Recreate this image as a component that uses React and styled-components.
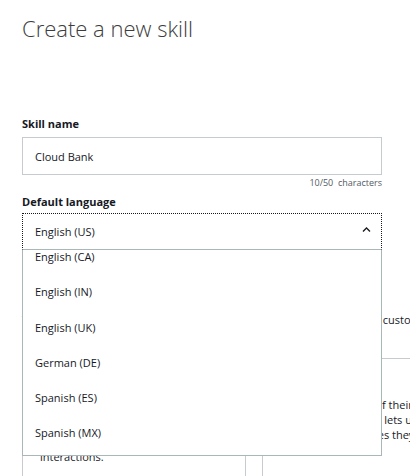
import React, { useEffect, useRef } from "react";
import styled, { createGlobalStyle } from "styled-components";

// ----- Global -----
const GlobalStyle = createGlobalStyle`
  html, body {
    margin: 0;
    padding: 0;
    background: #fff;
    overflow: hidden;
  }
  body {
    font-family: "Open Sans", "Noto Sans", sans-serif;
    color: #16191f;
  }
`;

// ----- Styled Components -----
const Page = styled.div`
  width: 760px;
  padding: 14px 0 40px 22px;
  box-sizing: border-box;
`;

const Title = styled.h1`
  margin: 0 0 74px;
  font-size: 22px;
  line-height: 28px;
  font-weight: 300;
  color: #3d3d3d;
`;

const Field = styled.div`
  position: relative;
  width: 360px;
  margin-bottom: ${({ $gap }) => $gap || 0}px;
`;

const Label = styled.label`
  display: block;
  font-size: 11px;
  line-height: 16px;
  font-weight: 700;
  color: #16191f;
  margin-bottom: ${({ $gap }) => $gap || 5}px;
`;

const TextInput = styled.div`
  height: 38px;
  box-sizing: border-box;
  border: 1px solid #c6cbcf;
  padding: 0 12px;
  display: flex;
  align-items: center;
  font-size: 11px;
  color: #16191f;
`;

const Counter = styled.div`
  text-align: right;
  font-size: 9px;
  line-height: 12px;
  margin-top: 2px;
  color: #545b64;
`;

const SelectWrap = styled.div`
  position: relative;
`;

const SelectBox = styled.div`
  height: 37px;
  box-sizing: border-box;
  border: 1px dotted #16191f;
  border-bottom: 1px solid #aab7b8;
  padding: 0 10px 0 12px;
  display: flex;
  align-items: center;
  justify-content: space-between;
  font-size: 11px;
  color: #16191f;

  svg {
    margin-bottom: 4px;
  }
`;

const Menu = styled.ul`
  position: absolute;
  top: 100%;
  left: 0;
  right: 0;
  height: 206px;
  margin: 0;
  padding: 0;
  list-style: none;
  box-sizing: border-box;
  border: 1px solid #aab7b8;
  border-top: none;
  background: #fff;
  overflow: hidden;
  z-index: 5;
`;

const Option = styled.li`
  height: 35.2px;
  display: flex;
  align-items: center;
  padding: 0 12px;
  font-size: 11px;
  color: #16191f;
`;

const Section = styled.section`
  margin-top: 36px;
`;

const SectionTitle = styled.h2`
  margin: 0 0 6px;
  font-size: 15px;
  line-height: 20px;
  font-weight: 400;
  color: #16191f;
`;

const Intro = styled.p`
  margin: 0 0 31px;
  font-size: 11px;
  line-height: 15px;
  white-space: nowrap;
  color: #16191f;
`;

const Cards = styled.div`
  display: flex;
  gap: 16px;
`;

const Card = styled.div`
  width: 224px;
  box-sizing: border-box;
  border: 1px solid #c6cbcf;
  padding: 16px 17px;
`;

const CardTitle = styled.div`
  font-size: 12px;
  line-height: 16px;
  font-weight: 700;
  margin-bottom: ${({ $gap }) => $gap}px;
`;

const CardText = styled.p`
  margin: 0;
  font-size: 11px;
  line-height: 15px;
  white-space: nowrap;
  color: #16191f;
`;

const Chevron = () => (
  <svg width="9" height="5" viewBox="0 0 9 5" fill="none">
    <path d="M1 4.5L4.5 1L8 4.5" stroke="#16191f" strokeWidth="1.3" />
  </svg>
);

const languages = [
  "English (AU)",
  "English (CA)",
  "English (IN)",
  "English (UK)",
  "German (DE)",
  "Spanish (ES)",
  "Spanish (MX)",
  "French (FR)",
];

// ----- Main Component -----
const App = () => {
  const menuRef = useRef(null);

  useEffect(() => {
    // list is scrolled a little past the first entry
    if (menuRef.current) menuRef.current.scrollTop = 45.8;
  }, []);

  return (
    <Page>
      <GlobalStyle />
      <Title>Create a new skill</Title>

      <Field $gap={5}>
        <Label>Skill name</Label>
        <TextInput>Cloud Bank</TextInput>
        <Counter>10/50&nbsp;&nbsp;characters</Counter>
      </Field>

      <Field>
        <Label $gap={3}>Default language</Label>
        <SelectWrap>
          <SelectBox>
            <span>English (US)</span>
            <Chevron />
          </SelectBox>
          <Menu ref={menuRef}>
            {languages.map((l) => (
              <Option key={l}>{l}</Option>
            ))}
          </Menu>
        </SelectWrap>
      </Field>

      <Section>
        <SectionTitle>Choose a model to add to your skill</SectionTitle>
        <Intro>
          There are many ways to start building a skill. You can design your own custom model or start with a prebuilt model.
        </Intro>
        <Cards>
          <Card>
            <CardTitle $gap={13}>Custom</CardTitle>
            <CardText>
              Design a unique experience
              <br />
              for your users. A custom model
              <br />
              enables you to create all of your
              <br />
              interactions.
            </CardText>
          </Card>
          <Card>
            <CardTitle $gap={6}>Flash Briefing</CardTitle>
            <CardText>
              Give users control of their news
              <br />
              feed. Prebuilt mode lets users
              <br />
              control what updates they listen to.
            </CardText>
          </Card>
        </Cards>
      </Section>
    </Page>
  );
};

export default App;
